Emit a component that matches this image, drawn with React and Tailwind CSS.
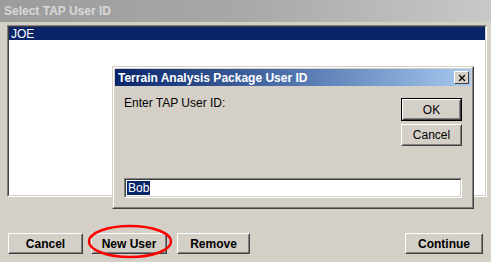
import { X } from 'lucide-react'

const font = "font-['Liberation_Sans','Arimo',Arial,sans-serif]"

// classic raised 3d button
function Btn({ label, bold, className = '' }) {
  return (
    <div className={`h-[21px] bg-[#d4d0c8] border border-t-white border-l-white border-r-[#404040] border-b-[#404040] ${className}`}>
      <div className="h-full border border-t-[#d4d0c8] border-l-[#d4d0c8] border-r-[#808080] border-b-[#808080] flex items-center justify-center">
        <span className={`text-[12px] leading-none text-black ${bold ? 'font-bold' : ''}`}>{label}</span>
      </div>
    </div>
  )
}

export default function App() {
  return (
    <div className={`relative w-[491px] h-[262px] bg-[#d4d0c8] overflow-hidden ${font}`}>
      {/* main dialog title */}
      <div className="h-[22px] bg-gradient-to-r from-[#9c9c9c] via-[#a8a8a8] to-[#c8c8c8] flex items-center px-[4px]">
        <span className="text-[12px] font-bold text-[#d8d8d8]">Select TAP User ID</span>
      </div>

      {/* user list */}
      <div className="mt-[3px] ml-[7px] mr-[4px] h-[172px] border border-t-[#808080] border-l-[#808080] border-r-white border-b-white">
        <div className="h-full border border-t-[#404040] border-l-[#404040] border-r-[#d4d0c8] border-b-[#d4d0c8] bg-white">
          <div className="h-[13px] bg-[#0a246a] flex items-center px-[2px]">
            <span className="text-[12px] leading-none text-white">JOE</span>
          </div>
        </div>
      </div>

      {/* bottom buttons */}
      <div className="mt-[36px] flex pl-[8px] pr-[8px]">
        <Btn label="Cancel" bold className="w-[75px]" />
        <Btn label="New User" bold className="w-[76px] ml-[8px]" />
        <Btn label="Remove" bold className="w-[73px] ml-[10px]" />
        <Btn label="Continue" bold className="w-[78px] ml-auto" />
      </div>

      {/* red annotation ring */}
      <svg className="absolute left-[86px] top-[223px]" width="88" height="37" viewBox="0 0 88 37">
        <ellipse cx="44" cy="18.5" rx="41" ry="15.5" fill="none" stroke="#ff0000" strokeWidth="2.5" />
      </svg>

      {/* popup dialog */}
      <div className="absolute left-[112px] top-[66px] w-[362px] h-[143px] border border-t-[#d4d0c8] border-l-[#d4d0c8] border-r-[#404040] border-b-[#404040]">
        <div className="h-full border border-t-white border-l-white border-r-[#808080] border-b-[#808080] bg-[#d4d0c8] p-[1px] flex flex-col">
          <div className="h-[17px] bg-gradient-to-r from-[#0a246a] to-[#a6caf0] flex items-center pl-[3px] pr-[2px]">
            <span className="text-[12px] font-bold text-white leading-none">Terrain Analysis Package User ID</span>
            <div className="ml-auto w-[15px] h-[13px] bg-[#d4d0c8] border border-t-white border-l-white border-r-[#404040] border-b-[#404040] flex items-center justify-center">
              <X size={10} strokeWidth={3} color="#000" />
            </div>
          </div>
          <div className="flex flex-1 pl-[9px] pr-[9px]">
            <div className="flex-1 flex flex-col">
              <span className="mt-[11px] text-[12px] leading-none text-black">Enter TAP User ID:</span>
            </div>
            <div className="flex flex-col mt-[12px] gap-[3px]">
              <div className="w-[61px] border border-black">
                <Btn label="OK" />
              </div>
              <Btn label="Cancel" className="w-[61px] h-[22px]" />
            </div>
          </div>
          <div className="mx-[9px] mb-[8px] h-[20px] border border-t-[#808080] border-l-[#808080] border-r-white border-b-white">
            <div className="h-full border border-t-[#404040] border-l-[#404040] border-r-[#d4d0c8] border-b-[#d4d0c8] bg-white flex items-center px-[1px]">
              <span className="bg-[#0a246a] text-white text-[12px] leading-[14px] px-[1px]">Bob</span>
            </div>
          </div>
        </div>
      </div>
    </div>
  )
}
